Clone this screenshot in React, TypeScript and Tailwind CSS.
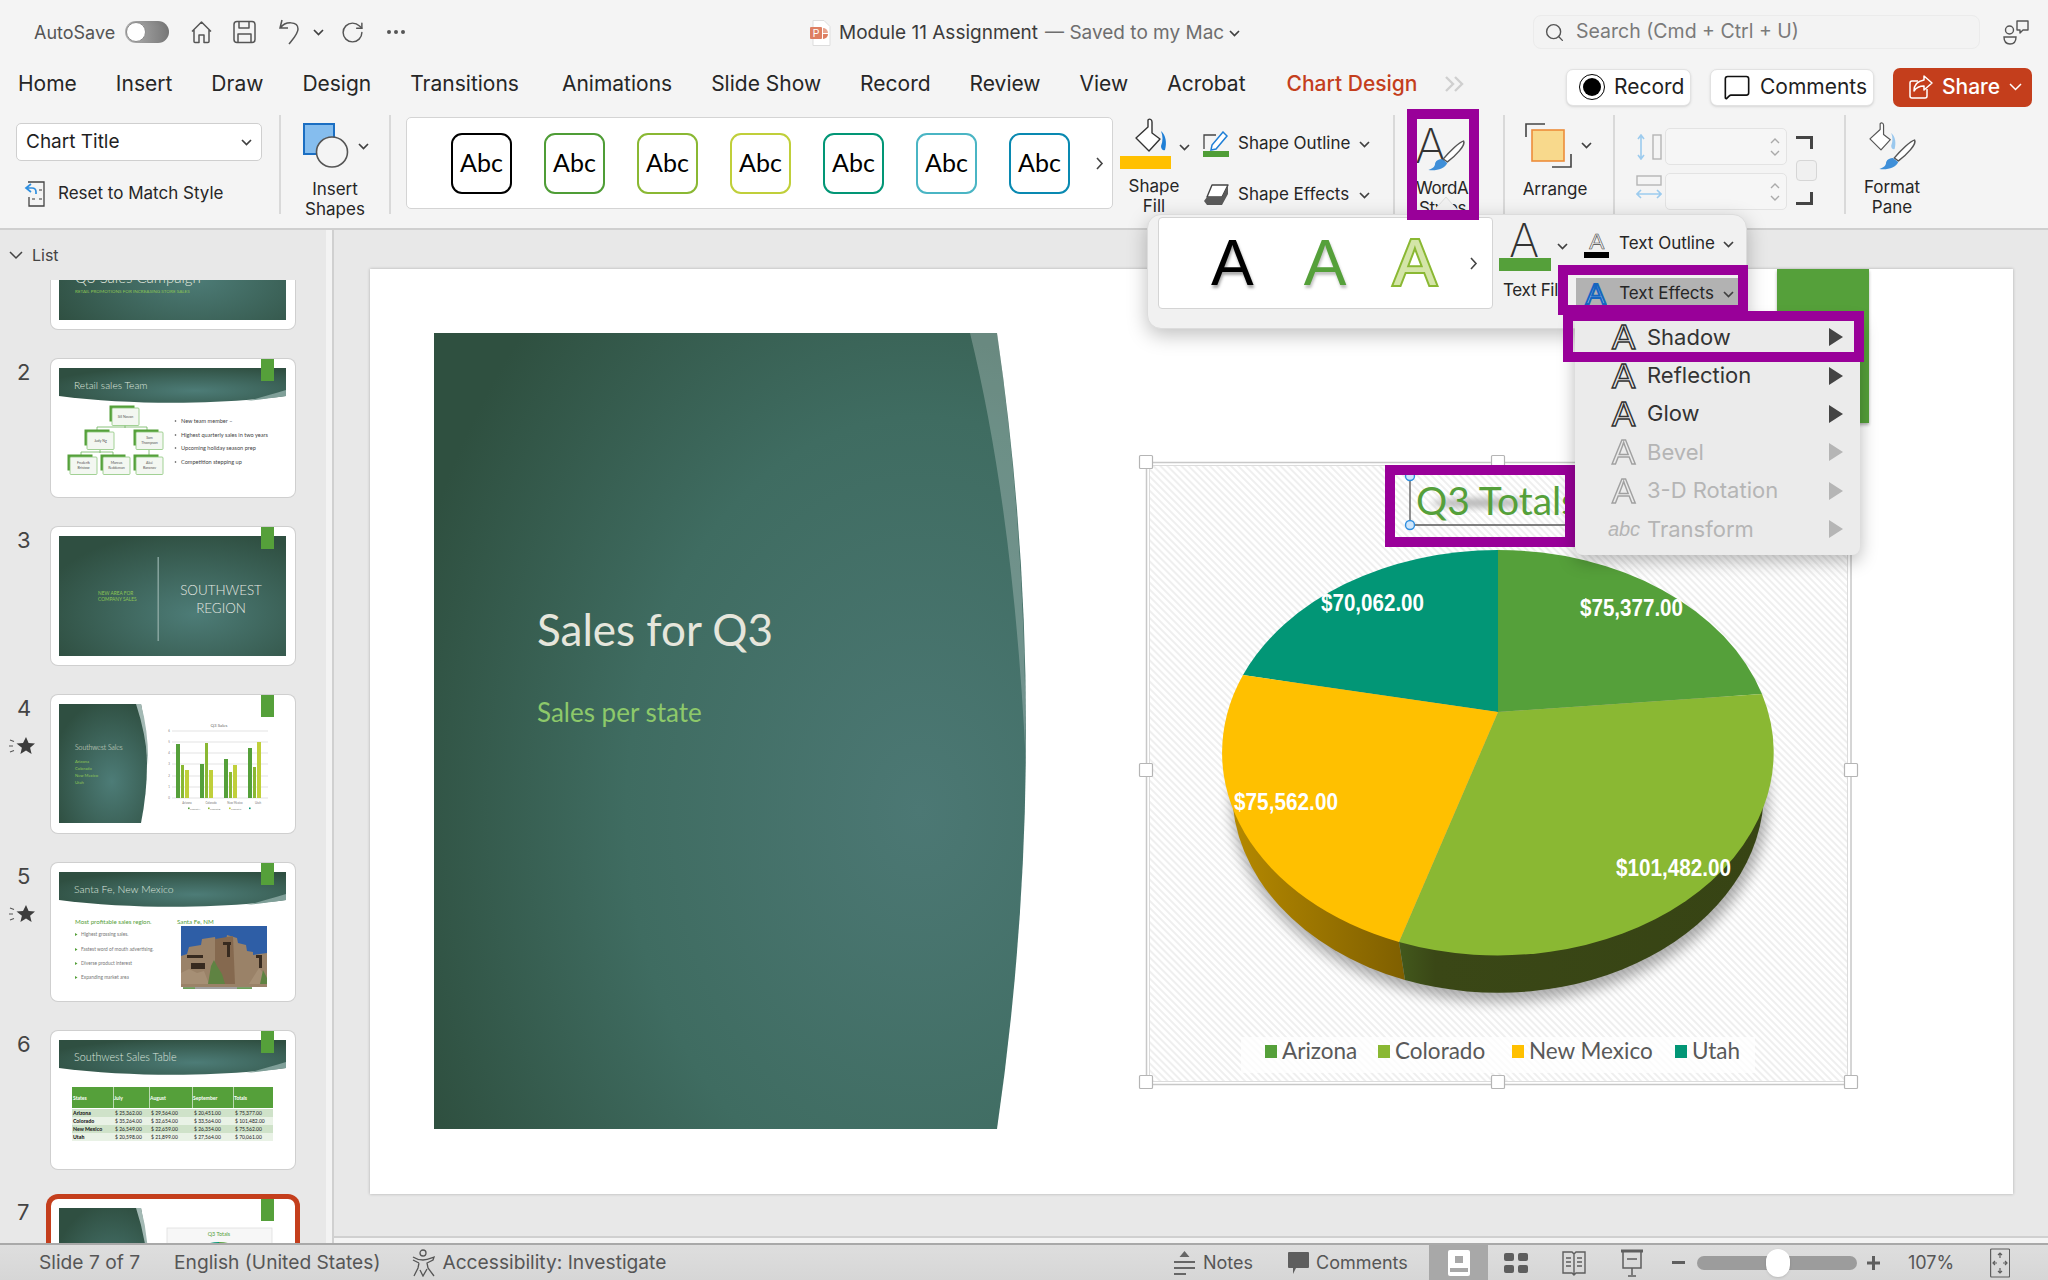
import { Search, MessageSquare, Ellipsis, RotateCw } from "lucide-react";

const tabs = ["Home", "Insert", "Draw", "Design", "Transitions", "Animations", "Slide Show", "Record", "Review", "View", "Acrobat"];
const abcColors = ["border-[#000000]", "border-[#4f9d36]", "border-[#8ab833]", "border-[#c0cf3a]", "border-[#029676]", "border-[#4ab5c4]", "border-[#0989b1]"];

const Chev = ({ className = "" }: { className?: string }) => (
  <svg width="11" height="7" viewBox="0 0 11 7" fill="none" className={className}>
    <path d="M1 1l4.5 4.5L10 1" stroke="#404040" strokeWidth="1.7" />
  </svg>
);

const Divider = () => <div className="w-[2px] h-[99px] mt-[11px] bg-[#d9d9d9] shrink-0" />;

const Label = ({ lines }: { lines: string[] }) => (
  <div className="text-[17px] leading-[20px] text-[#262626] text-center whitespace-nowrap">
    {lines.map((l) => (
      <div key={l}>{l}</div>
    ))}
  </div>
);

// outlined "A" used on the text effect icons, real glyph with a stroke
const OutlineA = ({ size = 34, color = "#444", fill = "none", sw = 1.2, grey = false }: { size?: number; color?: string; fill?: string; sw?: number; grey?: boolean }) => (
  <svg width={size * 0.8} height={size} viewBox="0 0 28 34" className={grey ? "opacity-40" : ""}>
    <text x="14" y="29" textAnchor="middle" fontSize="36" fontFamily="Liberation Sans" fill={fill} stroke={color} strokeWidth={sw}>
      A
    </text>
  </svg>
);

const Brush = ({ x = 0, y = 0, sx = 1 }: { x?: number; y?: number; sx?: number }) => (
  <g transform={`translate(${x} ${y}) scale(${sx} 1)`}>
    <path d="M30 1c2 4-6 15-12 21l-3-3C20 11 27 2 30 1z" fill="#fff" stroke="#555" strokeWidth="1.2" />
    <path d="M14 19l4 4c-2 6-8 8-14 7 4-2 5-4 5-7 1-3 3-4 5-4z" fill="#3f8fd8" />
  </g>
);

const Bucket = ({ light = false }: { light?: boolean }) => (
  <g>
    <path d="M19 3c2-2 4 0 4 2v11l8 6-11 12-13-13 12-11z" fill="#fff" stroke={light ? "#555" : "#333"} strokeWidth="1.4" strokeLinejoin="round" />
    <path d="M32 14c5 4 6 12 4 19-2 1-4-1-4-4 2-5 2-10 0-15z" fill={light ? "#9ac8ee" : "#1f7fd6"} />
  </g>
);

function TitleBar() {
  return (
    <div className="h-[64px] flex items-center relative text-[#3c3c3c]">
      <span className="ml-[34px] text-[18px] text-[#555555]">AutoSave</span>
      <div className="ml-[10px] w-[44px] h-[22px] rounded-full bg-linear-to-r from-[#b5b5b5] to-[#777777] flex items-center shadow-inner">
        <div className="w-[20px] h-[20px] ml-[1px] rounded-full bg-white border border-[#8a8a8a]" />
      </div>
      <svg width="23" height="24" viewBox="0 0 23 24" fill="none" stroke="#555" strokeWidth="1.5" strokeLinejoin="round" className="ml-[21px]">
        <path d="M2 11.5 11.5 2 21 11.5M4 10v11.5a1 1 0 0 0 1 1h4V15h5v7.5h4a1 1 0 0 0 1-1V10" />
      </svg>
      <svg width="23" height="24" viewBox="0 0 23 24" fill="none" stroke="#555" strokeWidth="1.5" strokeLinejoin="round" className="ml-[20px]">
        <rect x="1" y="1.5" width="21" height="21" rx="3" />
        <path d="M6 2v6h10V2M5 22v-8h13v8" />
      </svg>
      <svg width="23" height="28" viewBox="0 0 23 28" fill="none" stroke="#555" strokeWidth="1.5" className="ml-[22px]">
        <path d="M4 2 2 10l8 0M2.5 10C7 3 20 3 20 11c0 5-5 10-9 15" />
      </svg>
      <Chev className="ml-[12px]" />
      <RotateCw size={25} strokeWidth={1.4} color="#555" className="ml-[16px]" />
      <Ellipsis size={24} strokeWidth={2} color="#555" className="ml-[19px]" />

      <div className="absolute left-[810px] top-[19px] flex items-center">
        <svg width="22" height="26" viewBox="0 0 22 26">
          <path d="M3 .5h11l6 6v19H3z" fill="#fff" stroke="#ddd" />
          <rect x="0" y="7" width="12" height="12" rx="1" fill="#de7f62" />
          <path d="M13 8a5 5 0 0 1 5 5h-5z" fill="#e8a48e" />
          <path d="M13 14h5a5 5 0 0 1-5 5z" fill="#de7f62" />
          <text x="6" y="17" textAnchor="middle" fontSize="10" fill="#fff" fontFamily="Liberation Sans">P</text>
        </svg>
        <span className="ml-[7px] text-[19px] text-[#3c3c3c] whitespace-nowrap">Module 11 Assignment</span>
        <span className="ml-[7px] text-[19px] text-[#6e6e6e] whitespace-nowrap">— Saved to my Mac</span>
        <Chev className="ml-[5px]" />
      </div>

      <div className="absolute left-[1533px] top-[15px] w-[447px] h-[34px] rounded-[8px] border border-[#ebebeb] bg-[#f3f3f3] flex items-center">
        <Search size={21} strokeWidth={1.6} color="#555" className="ml-[10px]" />
        <span className="ml-[11px] text-[19.5px] text-[#7a7a7a]">Search (Cmd + Ctrl + U)</span>
      </div>
      <svg width="27" height="26" viewBox="0 0 27 26" fill="none" stroke="#555" strokeWidth="1.4" className="absolute left-[2003px] top-[19px]">
        <circle cx="6.5" cy="11" r="4" />
        <path d="M1 18h12c0 4-2 7-6 7s-6-3-6-7z" />
        <path d="M14 2h11v9h-5l-3 3v-3h-3z" strokeLinejoin="round" />
      </svg>
    </div>
  );
}

function TabBar() {
  return (
    <div className="h-[40px] flex items-center text-[#262626]">
      <div className="flex items-center pl-[18px] gap-[39px] text-[21px] whitespace-nowrap">
        {tabs.map((t) => (
          <span key={t} className={t === "Animations" ? "ml-[4px]" : ""}>{t}</span>
        ))}
        <span className="ml-[2px] text-[#c43e1c] font-medium">Chart Design</span>
      </div>
      <svg width="20" height="16" viewBox="0 0 20 16" fill="none" stroke="#cfcfcf" strokeWidth="2.4" className="ml-[27px]">
        <path d="M2 1l7 7-7 7M11 1l7 7-7 7" />
      </svg>
      <div className="ml-auto pr-[16px] pt-[6px] flex items-center gap-[19px] text-[21px] text-[#1f1f1f]">
        <div className="h-[37px] w-[125px] rounded-[7px] bg-white border border-[#e2e2e2] shadow-sm flex items-center pl-[12px] gap-[9px]">
          <div className="w-[26px] h-[26px] rounded-full border border-black flex items-center justify-center shrink-0">
            <div className="w-[18px] h-[18px] rounded-full bg-black" />
          </div>
          Record
        </div>
        <div className="h-[37px] w-[164px] rounded-[7px] bg-white border border-[#e2e2e2] shadow-sm flex items-center pl-[12px] gap-[9px]">
          <MessageSquare size={28} strokeWidth={1.4} color="#111" className="shrink-0" />
          Comments
        </div>
        <div className="h-[39px] w-[139px] rounded-[7px] bg-[#c43e1c] flex items-center pl-[15px] text-white font-medium">
          <svg width="26" height="26" viewBox="0 0 26 26" fill="none" stroke="#fff" strokeWidth="1.5" strokeLinejoin="round" className="shrink-0">
            <path d="M19 15v7a2 2 0 0 1-2 2H4a2 2 0 0 1-2-2V9a2 2 0 0 1 2-2h6" />
            <path d="M16 2l8 7-8 7v-4c-5 0-8 2-10 5 0-6 4-10 10-11z" />
          </svg>
          <span className="ml-[8px]">Share</span>
          <svg width="13" height="8" viewBox="0 0 13 8" fill="none" stroke="#fff" strokeWidth="1.5" className="ml-[9px] shrink-0">
            <path d="M1 1l5.5 5.5L12 1" />
          </svg>
        </div>
      </div>
    </div>
  );
}

function Ribbon() {
  return (
    <div className="h-[124px] flex items-start border-b-0">
      <div className="w-[279px] shrink-0 pl-[16px] pt-[19px]">
        <div className="w-[246px] h-[38px] rounded-[5px] bg-white border border-[#cfcfcf] flex items-center justify-between px-[9px] text-[19px] text-[#1f1f1f]">
          Chart Title
          <Chev />
        </div>
        <div className="flex items-center mt-[20px] ml-[7px] h-[26px]">
          <svg width="23" height="26" viewBox="0 0 23 26" fill="none">
            <path d="M5 1h16v24H6v-9" stroke="#444" strokeWidth="1.3" />
            <path d="M8 3 3 7l5 4M3 7h6c3 0 4 2 4 4v2" stroke="#2f8fe0" strokeWidth="1.7" />
            <path d="M16 9h3M16 18h3M9 18h3" stroke="#777" strokeWidth="1.3" />
          </svg>
          <span className="ml-[12px] text-[17px] text-[#262626] whitespace-nowrap">Reset to Match Style</span>
        </div>
      </div>
      <Divider />
      <div className="w-[108px] shrink-0 flex flex-col items-center">
        <div className="h-[75px] w-full flex items-start pt-[19px] pl-[22px]">
          <svg width="46" height="45" viewBox="0 0 46 45">
            <rect x="1" y="1" width="30" height="30" fill="#85bdee" stroke="#1b6ec2" strokeWidth="2" />
            <ellipse cx="29" cy="29" rx="15.5" ry="15" fill="#f4f4f4" stroke="#555" strokeWidth="1.6" />
          </svg>
          <Chev className="ml-[9px] mt-[20px]" />
        </div>
        <Label lines={["Insert", "Shapes"]} />
      </div>
      <Divider />
      <div className="w-[707px] h-[92px] ml-[15px] mt-[13px] shrink-0 rounded-[5px] bg-white border border-[#d4d4d4] flex items-center pl-[44px] relative">
        <div className="flex gap-[32px]">
          {abcColors.map((c) => (
            <div key={c} className={`w-[61px] h-[61px] rounded-[11px] border-2 ${c} flex items-center justify-center font-['Lato',sans-serif] text-[25px] text-black`}>
              Abc
            </div>
          ))}
        </div>
        <svg width="8" height="13" viewBox="0 0 8 13" fill="none" stroke="#444" strokeWidth="1.6" className="ml-[26px]">
          <path d="M1 1l5 5.5L1 12" />
        </svg>
      </div>
      <div className="w-[280px] shrink-0 flex">
        <div className="w-[80px] ml-[1px] shrink-0 flex flex-col items-center">
          <svg width="42" height="40" viewBox="0 0 42 38" className="mt-[12px] self-start ml-[15px]">
            <Bucket />
          </svg>
          <div className="w-[51px] h-[13px] bg-[#ffc000] self-start ml-[6px]" />
          <div className="mt-[7px]">
            <Label lines={["Shape", "Fill"]} />
          </div>
        </div>
        <Chev className="mt-[40px] -ml-[15px] shrink-0" />
        <div className="ml-[13px] pt-[26px] text-[17px] text-[#262626] whitespace-nowrap">
          <div className="flex items-center h-[28px]">
            <svg width="26" height="26" viewBox="0 0 26 26" fill="none">
              <path d="M13 4H1v14" stroke="#444" strokeWidth="1.3" />
              <path d="M20 1l4 4-11 13-5 1 1-5z" fill="#fff" stroke="#1f7fd6" strokeWidth="1.5" />
              <rect x="0" y="20" width="26" height="6" fill="#4f9d36" />
            </svg>
            <span className="ml-[9px] w-[114px]">Shape Outline</span>
            <Chev className="ml-[7px]" />
          </div>
          <div className="flex items-center h-[28px] mt-[23px]">
            <svg width="26" height="24" viewBox="0 0 26 24" fill="none">
              <path d="M9 2h16l-6 12H4z" fill="#fff" stroke="#444" strokeWidth="1.4" strokeLinejoin="round" />
              <path d="M4 14h15l6-12v9l-6 11H4l-3-4z" fill="#5a5a5a" />
            </svg>
            <span className="ml-[9px] w-[114px]">Shape Effects</span>
            <Chev className="ml-[7px]" />
          </div>
        </div>
      </div>
      <Divider />
      <div className="w-[108px] shrink-0 flex flex-col items-start relative">
        <svg width="60" height="52" viewBox="0 0 60 52" className="mt-[19px] ml-[19px]">
          <text x="1" y="40" fontSize="48" fontFamily="Inter" fontWeight="200" fill="#333">A</text>
          <Brush x={9} y={17} sx={1.35} />
        </svg>
        <div className="mt-[3px] ml-[21px] w-[53px] overflow-hidden tracking-[-0.4px]">
          <Label lines={["WordArt", "Styles"]} />
        </div>
      </div>
      <Divider />
      <div className="w-[108px] shrink-0 flex flex-col items-center">
        <div className="h-[75px] w-full flex items-start pt-[19px] pl-[20px]">
          <svg width="47" height="45" viewBox="0 0 47 45" fill="none">
            <path d="M1 14V1h19M46 31v13H27" stroke="#444" strokeWidth="1.6" />
            <rect x="7" y="7" width="32" height="31" fill="#f8d98c" stroke="#ed8d3a" strokeWidth="1.6" />
          </svg>
          <Chev className="ml-[9px] mt-[19px]" />
        </div>
        <div className="pr-[8px]">
          <Label lines={["Arrange"]} />
        </div>
      </div>
      <Divider />
      <div className="w-[229px] shrink-0 flex pl-[21px] pt-[24px]">
        <div className="flex flex-col gap-[15px] pt-[6px]">
          <svg width="26" height="26" viewBox="0 0 26 26" fill="none">
            <path d="M5 1v24M2 5l3-4 3 4M2 21l3 4 3-4" stroke="#9ccbee" strokeWidth="1.6" />
            <rect x="17" y="1" width="8" height="24" stroke="#b5b5b5" strokeWidth="1.4" />
          </svg>
          <svg width="26" height="25" viewBox="0 0 26 25" fill="none">
            <rect x="1" y="1" width="24" height="9" stroke="#b5b5b5" strokeWidth="1.4" />
            <path d="M1 19h24M5 15l-4 4 4 4M21 15l4 4-4 4" stroke="#9ccbee" strokeWidth="1.6" />
          </svg>
        </div>
        <div className="ml-[3px] flex flex-col gap-[8px]">
          {[0, 1].map((i) => (
            <div key={i} className="w-[122px] h-[37px] rounded-[5px] bg-[#f6f6f6] border border-[#e3e3e3] flex flex-col items-end justify-center gap-[6px] pr-[6px]">
              <svg width="10" height="6" viewBox="0 0 10 6" fill="none" stroke="#aaa" strokeWidth="1.4"><path d="M1 5l4-4 4 4" /></svg>
              <svg width="10" height="6" viewBox="0 0 10 6" fill="none" stroke="#aaa" strokeWidth="1.4"><path d="M1 1l4 4 4-4" /></svg>
            </div>
          ))}
        </div>
        <div className="ml-[9px] flex flex-col items-center pt-[8px] w-[21px]">
          <svg width="17" height="13" viewBox="0 0 17 13" fill="none" stroke="#444" strokeWidth="3" className="-ml-[4px]"><path d="M0 1.5h15.5V13" /></svg>
          <div className="mt-[11px] w-[21px] h-[21px] rounded-[4px] bg-[#f0f0f0] border border-[#d6d6d6]" />
          <svg width="17" height="13" viewBox="0 0 17 13" fill="none" stroke="#444" strokeWidth="3" className="mt-[11px] -ml-[4px]"><path d="M15.5 0v11.5H0" /></svg>
        </div>
      </div>
      <Divider />
      <div className="w-[92px] shrink-0 flex flex-col items-center">
        <svg width="56" height="50" viewBox="0 0 56 50" className="mt-[17px]">
          <g transform="scale(0.85)"><Bucket light /></g>
          <Brush x={10} y={18} sx={1.35} />
        </svg>
        <div className="mt-[6px]">
          <Label lines={["Format", "Pane"]} />
        </div>
      </div>
    </div>
  );
}

// ---- slide thumbnails, each is a small picture with its own 244x138 canvas
const Grad = ({ id }: { id: string }) => (
  <defs>
    <radialGradient id={id} cx="60%" cy="65%" r="70%">
      <stop offset="0%" stopColor="#4d7c77" />
      <stop offset="100%" stopColor="#2f4f41" />
    </radialGradient>
  </defs>
);

const Accent = () => <rect x="210" y="0" width="13" height="22" fill="#55a03a" />;

const Banner = ({ id, title, size = 10.2 }: { id: string; title: string; size?: number }) => (
  <g>
    <Grad id={id} />
    <path d="M8 9h227v28c-60 8-150 10-227 0z" fill={`url(#${id})`} />
    <path d="M235 31v6c-20 3-30 4-40 5 14-3 26-7 40-11z" fill="#7f9f98" />
    <text x="23" y="30" fontSize={size} fontWeight="300" fill="#dfe5dd">{title}</text>
  </g>
);

const OrgBox = ({ x, y, lines }: { x: number; y: number; lines: string[] }) => (
  <g>
    <rect x={x - 2.5} y={y - 2.5} width="25" height="16" fill="#55a03a" />
    <rect x={x} y={y} width="27" height="17.5" rx="1" fill="#f3f7f1" stroke="#8cc77b" strokeWidth="0.8" />
    {lines.map((l, i) => (
      <text key={l} x={x + 13.5} y={y + (lines.length === 1 ? 10 : 7) + i * 5} fontSize="3.6" textAnchor="middle" fill="#555">{l}</text>
    ))}
  </g>
);

const ThumbSvg = ({ children }: { children: React.ReactNode }) => (
  <svg width="244" height="138" viewBox="0 0 244 138" className="block font-['Lato',sans-serif]">
    {children}
  </svg>
);

const Thumb1 = () => (
  <ThumbSvg>
    <Grad id="t1" />
    <rect x="8" y="9" width="227" height="120" fill="url(#t1)" />
    <text x="24" y="92" fontSize="15" fontWeight="300" fill="#e4e8df">Q3 Sales Campaign</text>
    <text x="24" y="102" fontSize="4.6" fill="#8dc655">RETAIL PROMOTIONS FOR INCREASING STORE SALES</text>
  </ThumbSvg>
);

const Thumb2 = () => (
  <ThumbSvg>
    <Banner id="t2" title="Retail sales Team" />
    <path d="M74 66v3M46 73v-5h50v5M49 91v3M30 98v-5h32v5M98 91v7" stroke="#6db35a" strokeWidth="0.8" fill="none" />
    <OrgBox x={61} y={49} lines={["Sill Novan"]} />
    <OrgBox x={36} y={73} lines={["Judy Ng"]} />
    <OrgBox x={85} y={73} lines={["Sam", "Thompson"]} />
    <OrgBox x={19} y={98} lines={["Frederik", "Bristow"]} />
    <OrgBox x={52} y={98} lines={["Marcus", "Reddeman"]} />
    <OrgBox x={85} y={98} lines={["Aleé", "Baranov"]} />
    {[
      ["New team member –", 64],
      ["Highest quarterly sales in two years", 78],
      ["Upcoming holiday season prep", 91],
      ["Competition stepping up", 105],
    ].map(([t, y]) => (
      <g key={t as string}>
        <circle cx="124.5" cy={(y as number) - 2} r="0.8" fill="#444" />
        <text x="130" y={y as number} fontSize="5.6" fill="#444">{t}</text>
      </g>
    ))}
    <Accent />
  </ThumbSvg>
);

const Thumb3 = () => (
  <ThumbSvg>
    <Grad id="t3" />
    <rect x="8" y="9" width="227" height="120" fill="url(#t3)" />
    <rect x="106.5" y="30" width="1.4" height="84" fill="#8ba8a2" />
    <text x="47" y="68" fontSize="4.8" fill="#8dc655">NEW AREA FOR</text>
    <text x="47" y="74" fontSize="4.8" fill="#8dc655">COMPANY SALES</text>
    <text x="170" y="68" fontSize="13.4" fontWeight="300" fill="#e6e9e2" textAnchor="middle">SOUTHWEST</text>
    <text x="170" y="86" fontSize="13.4" fontWeight="300" fill="#e6e9e2" textAnchor="middle">REGION</text>
    <Accent />
  </ThumbSvg>
);

const SidePanel = ({ id }: { id: string }) => (
  <g>
    <Grad id={id} />
    <path d="M8 9h82q12 60 0 119H8z" fill={`url(#${id})`} />
    <path d="M85 9h5q8 30 7 62-2-32-12-62z" fill="#a3b9b4" />
  </g>
);

const bars = [
  [125, 49, 4],
  [130, 70, 3],
  [134, 75, 4],
  [149, 69, 4],
  [154, 48, 3],
  [158, 75, 4],
  [173, 64, 4],
  [178, 77, 3],
  [182, 70, 4],
  [197, 53, 4],
  [202, 72, 3],
  [206, 47, 4],
];
const barColors = ["#55a03a", "#8ab833", "#c0cf3a"];

const Thumb4 = () => (
  <ThumbSvg>
    <SidePanel id="t4" />
    <text x="24" y="55" fontSize="6.8" fontWeight="300" fill="#e0e5dd">Southwest Sales</text>
    {["Arizona", "Colorado", "New Mexico", "Utah"].map((s, i) => (
      <text key={s} x="24" y={67.5 + i * 7} fontSize="4.2" fill="#8dc655">{s}</text>
    ))}
    <text x="168" y="32" fontSize="4.4" fill="#666" textAnchor="middle">Q3 Sales</text>
    {[36, 47, 58, 69, 81, 92, 103].map((y, i) => (
      <g key={y}>
        <rect x="121" y={y - 0.5} width="96" height="1" fill="#e4e4e4" />
        <text x="118" y={y + 1} fontSize="2.8" fill="#777" textAnchor="middle">{6 - i}</text>
      </g>
    ))}
    {bars.map(([x, y, w], i) => (
      <rect key={x} x={x} y={y} width={w} height={103 - y} fill={barColors[i % 3]} />
    ))}
    {[["Arizona", 136], ["Colorado", 160], ["New Mexico", 184], ["Utah", 207]].map(([s, x]) => (
      <text key={s as string} x={x as number} y="109" fontSize="2.8" fill="#777" textAnchor="middle">{s}</text>
    ))}
    {[["Product A", 137, "#55a03a"], ["Product B", 157, "#8ab833"], ["Product C", 178, "#c0cf3a"]].map(([s, x, c]) => (
      <g key={s as string}>
        <rect x={x as number} y="112.5" width="1.6" height="1.6" fill={c as string} />
        <text x={(x as number) + 2} y="115" fontSize="2.4" fill="#777">{s}</text>
      </g>
    ))}
    <rect x="198" y="112.5" width="1.6" height="1.6" fill="#029676" />
    <Accent />
  </ThumbSvg>
);

const Thumb5 = () => (
  <ThumbSvg>
    <Banner id="t5" title="Santa Fe, New Mexico" size={10.4} />
    <text x="24" y="61" fontSize="6.2" fill="#55a03a">Most profitable sales region.</text>
    <text x="126" y="61" fontSize="6.2" fill="#55a03a">Santa Fe, NM</text>
    {[
      ["Highest grossing sales.", 73],
      ["Fastest word of mouth advertising.", 88],
      ["Diverse product interest", 102],
      ["Expanding market area", 116],
    ].map(([t, y]) => (
      <g key={t as string}>
        <path d={`M24 ${(y as number) - 3}l2.5 1.5-2.5 1.5z`} fill="#55a03a" />
        <text x="30" y={y as number} fontSize="4.8" fill="#777">{t}</text>
      </g>
    ))}
    <rect x="130" y="63" width="86" height="58" fill="#2e5ea6" />
    <path d="M130 93l6-2 2-7 12-2 1-6 13-2 1 6 10-2 1-6 10 3 1 5 8 2 1 6 6 1v3l14-2v34h-86z" fill="#9a8268" />
    <path d="M164 76l18-3 2 48h-20z" fill="#85694f" />
    <path d="M136 92h16v3h-16zM172 79h8v3h-8zM176 82h3v12h-3zM205 92h6v3h-6zM208 95h3v10h-3zM140 100h14v6h-14z" fill="#372a1f" />
    <path d="M130 110l8-4 8 4 7-2 5 13h-28zM198 121l10-16 8 10v6z" fill="#a68f75" />
    <path d="M157 121l3-18 3-6 3 6 5 8 3 10zM209 121l3-14 4 8v6z" fill="#5f8342" />
    <rect x="132" y="124.5" width="69" height="1" fill="#444" />
    <rect x="132" y="124.5" width="12" height="1.2" fill="#55a03a" />
    <rect x="186" y="124.5" width="15" height="1.2" fill="#55a03a" />
    <Accent />
  </ThumbSvg>
);

const tableRows = [
  ["Arizona", "$ 25,362.00", "$ 29,564.00", "$ 20,451.00", "$ 75,377.00"],
  ["Colorado", "$ 35,264.00", "$ 32,654.00", "$ 33,564.00", "$ 101,482.00"],
  ["New Mexico", "$ 26,549.00", "$ 22,659.00", "$ 26,354.00", "$ 75,562.00"],
  ["Utah", "$ 20,598.00", "$ 21,899.00", "$ 27,564.00", "$ 70,061.00"],
];
const colX = [21, 62, 98, 141, 182, 222];

const Thumb6 = () => (
  <ThumbSvg>
    <Banner id="t6" title="Southwest Sales Table" size={10.8} />
    <rect x="21" y="56" width="201" height="21" fill="#55a03a" />
    {["States", "July", "August", "September", "Totals"].map((h, i) => (
      <text key={h} x={colX[i] + 1} y="69" fontSize="5" fontWeight="700" fill="#fff">{h}</text>
    ))}
    {colX.slice(1, 5).map((x) => (
      <rect key={x} x={x} y="56" width="0.6" height="54" fill="#fff" />
    ))}
    {tableRows.map((r, i) => (
      <g key={r[0]}>
        <rect x="21" y={78 + i * 8} width="201" height="8" fill={i % 2 ? "#e9f2e6" : "#cfe2c9"} />
        {r.map((c, j) => (
          <text key={j} x={colX[j] + (j ? 2 : 1)} y={84 + i * 8} fontSize={j ? 5 : 5.2} fontWeight={j ? 400 : 900} fill="#222">{c}</text>
        ))}
      </g>
    ))}
    <Accent />
  </ThumbSvg>
);

const Thumb7 = () => (
  <ThumbSvg>
    <SidePanel id="t7" />
    <rect x="116" y="29" width="105" height="80" fill="#f7f7f7" stroke="#dedede" strokeWidth="0.8" />
    <text x="168" y="37" fontSize="5.4" fill="#55a03a" textAnchor="middle">Q3 Totals</text>
    <path d="M150 50a18 8 0 0 1 18-7v7z" fill="#029676" />
    <path d="M168 43a18 8 0 0 1 18 7h-18z" fill="#55a03a" />
    <Accent />
  </ThumbSvg>
);

const SlideRow = ({ n, star, active, top, children }: { n: number; star?: boolean; active?: boolean; top?: string; children: React.ReactNode }) => (
  <div className={`flex h-[138px] mb-[30px] shrink-0 ${top ?? ""}`}>
    <div className="w-[51px] shrink-0 pl-[17px] text-[22px] leading-[26px] text-[#444444] relative">
      {n > 1 && n}
      {star && (
        <svg width="28" height="20" viewBox="0 0 28 20" className="absolute left-[9px] top-[41px]">
          <path d="M17 1l2.6 6 6.4.5-4.9 4.2 1.5 6.3-5.6-3.4-5.6 3.4 1.5-6.3L7.5 7.5 14 7z" fill="#3d3d3d" />
          <path d="M1 4l4 1.5M0 10h4M1 16l4-1.5" stroke="#555" strokeWidth="1.1" />
        </svg>
      )}
    </div>
    <div className={`w-[244px] h-[138px] rounded-[7px] bg-white shadow-[0_0_0_1px_#cfcfcf] overflow-hidden shrink-0 ${active ? "ring-[5px] ring-[#c43e1c]" : ""}`}>
      {children}
    </div>
  </div>
);

function Sidebar() {
  return (
    <div className="w-[326px] shrink-0 bg-[#e8e8e8] flex flex-col overflow-hidden">
      <div className="h-[50px] shrink-0 flex items-center pl-[9px] text-[#444444] text-[16px]">
        <svg width="14" height="9" viewBox="0 0 14 9" fill="none" stroke="#444" strokeWidth="1.5">
          <path d="M1 1l6 6 6-6" />
        </svg>
        <span className="ml-[9px]">List</span>
      </div>
      <div className="flex-1 overflow-hidden">
        <SlideRow n={1} top="-mt-[89px]"><Thumb1 /></SlideRow>
        <SlideRow n={2}><Thumb2 /></SlideRow>
        <SlideRow n={3}><Thumb3 /></SlideRow>
        <SlideRow n={4} star><Thumb4 /></SlideRow>
        <SlideRow n={5} star><Thumb5 /></SlideRow>
        <SlideRow n={6}><Thumb6 /></SlideRow>
        <SlideRow n={7} active><Thumb7 /></SlideRow>
      </div>
    </div>
  );
}

// chart drawn in page coordinates so the numbers line up with the reference
const handles = [
  [1146, 462],
  [1498, 462],
  [1851, 462],
  [1146, 770],
  [1851, 770],
  [1146, 1082],
  [1498, 1082],
  [1851, 1082],
];

const pieLabels: [string, number, number, number][] = [
  ["$70,062.00", 1321, 611, 103],
  ["$75,377.00", 1580, 616, 103],
  ["$75,562.00", 1234, 810, 104],
  ["$101,482.00", 1616, 876, 115],
];

function Chart() {
  return (
    <svg viewBox="1135 452 726 642" width="726" height="642" className="absolute left-[765px] top-[183px] font-['Lato',sans-serif]">
      <defs>
        <pattern id="hatch" width="5" height="5" patternUnits="userSpaceOnUse" patternTransform="rotate(-45)">
          <rect width="5" height="5" fill="#ffffff" />
          <rect width="2" height="5" fill="#efefef" />
        </pattern>
        <linearGradient id="goldSide" x1="0" y1="0" x2="1" y2="0">
          <stop offset="0%" stopColor="#b58900" />
          <stop offset="100%" stopColor="#7f5f00" />
        </linearGradient>
        <linearGradient id="greenSide" x1="0" y1="0" x2="1" y2="0">
          <stop offset="0%" stopColor="#43591c" />
          <stop offset="10%" stopColor="#3a4716" />
          <stop offset="100%" stopColor="#374414" />
        </linearGradient>
        <filter id="pieBlur" x="-10%" y="-10%" width="120%" height="120%">
          <feGaussianBlur stdDeviation="7" />
        </filter>
        <filter id="ghost" x="-20%" y="-50%" width="140%" height="200%">
          <feGaussianBlur stdDeviation="3" />
        </filter>
      </defs>
      <rect x="1149" y="465" width="699" height="617" fill="url(#hatch)" />
      <rect x="1146.5" y="462.5" width="704.5" height="622" fill="none" stroke="#c8c8c8" strokeWidth="1.5" />
      <rect x="1149.5" y="465.5" width="698" height="616" fill="none" stroke="#dcdcdc" strokeWidth="1" />
      {handles.map(([x, y]) => (
        <rect key={`${x}-${y}`} x={x - 6.5} y={y - 6.5} width="13" height="13" rx="1" fill="#fff" stroke="#b5b5b5" strokeWidth="1.2" />
      ))}

      <ellipse cx="1500" cy="800" rx="268" ry="202" fill="#000" opacity="0.32" filter="url(#pieBlur)" />
      <path d="M1232 791A266 202 0 0 0 1405 980L1399 942 1232 760Z" fill="url(#goldSide)" />
      <path d="M1405 980A266 202 0 0 0 1764 791L1762 760 1399 942Z" fill="url(#greenSide)" />

      <path d="M1498 712V550A276 203 0 0 0 1243 675Z" fill="#029676" />
      <path d="M1498 712V550A276 203 0 0 1 1762 694Z" fill="#55a03a" />
      <path d="M1498 712L1762 694A276 203 0 0 1 1399 942Z" fill="#8ab833" />
      <path d="M1498 712L1399 942A276 203 0 0 1 1243 675Z" fill="#ffc000" />

      <g fontFamily="Liberation Sans" fontWeight="700" fontSize="23" fill="#fff">
        {pieLabels.map(([t, x, y, w]) => (
          <text key={t} x={x} y={y} textLength={w} lengthAdjust="spacingAndGlyphs">{t}</text>
        ))}
      </g>

      <rect x="1241" y="1037" width="514" height="36" fill="#fff" opacity="0.75" />
      {[
        ["Arizona", 1265, "#55a03a"],
        ["Colorado", 1378, "#8ab833"],
        ["New Mexico", 1512, "#ffc000"],
        ["Utah", 1675, "#029676"],
      ].map(([t, x, c]) => (
        <g key={t as string}>
          <rect x={x as number} y="1045" width="12" height="13" fill={c as string} />
          <text x={(x as number) + 17} y="1059" fontSize="22.5" fill="#595959">{t}</text>
        </g>
      ))}

      <ellipse cx="1480" cy="503" rx="48" ry="5" fill="#b9b9b9" filter="url(#ghost)" />
      <text x="1416" y="515" fontSize="39" fill="#55a03a">Q3 Totals</text>
      <path d="M1410 476V525H1570" stroke="#555" strokeWidth="1.3" fill="none" />
      <circle cx="1410" cy="476" r="4.5" fill="#cfe6fb" stroke="#2f8fe0" strokeWidth="1.4" />
      <circle cx="1410" cy="525" r="4.5" fill="#cfe6fb" stroke="#2f8fe0" strokeWidth="1.4" />
    </svg>
  );
}

function SlideCanvas() {
  return (
    <div className="flex-1 min-w-0 bg-[#e8e8e8] flex flex-col">
      <div className="flex-1 pl-[36px] pt-[39px]">
        <div className="relative w-[1643px] h-[925px] bg-white shadow-[0_0_3px_rgba(0,0,0,0.25)] font-['Lato',sans-serif]">
          <svg width="600" height="796" viewBox="0 0 600 796" className="absolute left-[64px] top-[64px]">
            <defs>
              <radialGradient id="panel" cx="82%" cy="60%" r="90%">
                <stop offset="0%" stopColor="#4c7874" />
                <stop offset="55%" stopColor="#3f6c61" />
                <stop offset="100%" stopColor="#2f5040" />
              </radialGradient>
            </defs>
            <path d="M0 0H563Q621 398 563 796H0Z" fill="url(#panel)" />
            <path d="M536 0H563Q592 200 592 433Q580 180 536 0Z" fill="#fff" opacity="0.24" />
          </svg>
          <div className="absolute left-[167px] top-[334px] text-[44px] leading-[52px] text-[#e6e6dc] whitespace-nowrap">Sales for Q3</div>
          <div className="absolute left-[167px] top-[426px] text-[26px] leading-[34px] text-[#8dc96a] whitespace-nowrap">Sales per state</div>
          <div className="absolute left-[1407px] top-0 w-[92px] h-[154px] bg-[#55a03a] shadow-[0_2px_3px_rgba(0,0,0,0.3)]" />
          <Chart />
        </div>
      </div>
      <div className="h-[7px] shrink-0 border-t-2 border-[#d0d0d0] bg-[#f4f4f4]" />
    </div>
  );
}

function StatusBar() {
  return (
    <div className="h-[37px] shrink-0 border-t-2 border-[#a9a9a9] bg-linear-to-b from-[#dedede] to-[#d6d6d6] flex items-center text-[19.2px] text-[#565656] whitespace-nowrap">
      <span className="ml-[39px]">Slide 7 of 7</span>
      <span className="ml-[34px]">English (United States)</span>
      <svg width="25" height="28" viewBox="0 0 25 28" fill="none" stroke="#555" strokeWidth="1.3" className="ml-[32px]">
        <circle cx="11" cy="4" r="3" />
        <path d="M1 8c3 2 6 3 10 3s6-1 11-3l-1 3-6 3 1 5 6 8M7 14l-1 5-4 8M7 14l-6-3M15 20l-4 7-3-6" />
      </svg>
      <span className="ml-[5px]">Accessibility: Investigate</span>

      <div className="ml-auto pr-[38px] flex items-center h-full text-[18px]">
        <svg width="21" height="26" viewBox="0 0 21 26" fill="#666">
          <path d="M10.5 1l5 6h-10zM0 11h21v2H0zM0 17h21v2H0zM0 23h12v2H0z" />
        </svg>
        <span className="ml-[8px] w-[52px]">Notes</span>
        <svg width="21" height="26" viewBox="0 0 21 26" fill="#5e5e5e" className="ml-[33px]">
          <path d="M1 2h19a1 1 0 0 1 1 1v14a1 1 0 0 1-1 1H8l-3 6v-6H1a1 1 0 0 1-1-1V3a1 1 0 0 1 1-1z" />
        </svg>
        <span className="ml-[7px] w-[96px]">Comments</span>
        <div className="ml-[17px] w-[59px] h-full bg-[#a8a8a8] flex items-center justify-center">
          <svg width="22" height="26" viewBox="0 0 22 26" fill="none">
            <rect x="0" y="0" width="22" height="26" rx="2" fill="#fff" />
            <rect x="7" y="6" width="8" height="7" fill="#a8a8a8" />
            <rect x="2" y="18" width="18" height="4" fill="#a8a8a8" />
          </svg>
        </div>
        <svg width="24" height="24" viewBox="0 0 24 24" fill="#5e5e5e" className="ml-[16px]">
          <rect x="0" y="2" width="10" height="8" rx="2" />
          <rect x="14" y="2" width="10" height="8" rx="2" />
          <rect x="0" y="14" width="10" height="8" rx="2" />
          <rect x="14" y="14" width="10" height="8" rx="2" />
        </svg>
        <svg width="24" height="26" viewBox="0 0 24 26" fill="none" stroke="#5e5e5e" strokeWidth="1.4" className="ml-[34px]">
          <path d="M1 2h9l2 2 2-2h9v21h-9l-2 2-2-2H1zM12 4v21M4 8h5M4 12h5M4 16h5M15 8h5M15 12h5M15 16h5" />
        </svg>
        <svg width="24" height="28" viewBox="0 0 24 28" fill="none" stroke="#5e5e5e" strokeWidth="1.5" className="ml-[34px]">
          <path d="M1 2h22" strokeWidth="3" />
          <path d="M3 3v16h18V3M7 10h10M12 19v7M8 27h8" />
        </svg>
        <div className="ml-[28px] w-[13px] h-[3px] bg-[#5e5e5e]" />
        <div className="ml-[12px] w-[160px] h-[14px] rounded-full bg-[#9c9c9c] relative">
          <div className="absolute left-[69px] -top-[7px] w-[24px] h-[28px] rounded-full bg-white shadow" />
        </div>
        <svg width="13" height="14" viewBox="0 0 13 14" fill="#5e5e5e" className="ml-[10px]">
          <path d="M0 5.5h13v3H0zM5 0h3v14H5z" />
        </svg>
        <span className="ml-[28px] w-[49px]">107%</span>
        <svg width="20" height="30" viewBox="0 0 20 30" fill="none" stroke="#5e5e5e" strokeWidth="1.2" className="ml-[33px]">
          <rect x="0.6" y="1" width="19" height="28" rx="1" />
          <path d="M10 5v5M8 7l2-2 2 2M10 25v-5M8 23l2 2 2-2M4 15h3M5 13l-2 2 2 2M16 15h-3M15 13l2 2-2 2" />
        </svg>
      </div>
    </div>
  );
}

function TextEffectsPopup() {
  return (
    <div className="absolute left-[1147px] top-[214px] w-[600px] h-[115px] rounded-[14px] bg-[#f1f1f1] border border-[#dcdcdc] shadow-[0_6px_20px_rgba(0,0,0,0.25)] flex">
      <div className="ml-[10px] mt-[2px] w-[335px] h-[92px] rounded-[4px] bg-white border border-[#d4d4d4] flex items-center font-['Liberation_Sans',sans-serif] text-[64px] leading-none">
        <span className="ml-[52px] text-black [text-shadow:1px_3px_3px_rgba(0,0,0,0.35)]">A</span>
        <span className="ml-[50px] text-[#55a03a] [text-shadow:1px_3px_3px_rgba(0,0,0,0.25)]">A</span>
        <span className="ml-[47px] text-[#d4e5a8] [-webkit-text-stroke:4px_#8ab833] [paint-order:stroke_fill]">A</span>
        <svg width="8" height="13" viewBox="0 0 8 13" fill="none" stroke="#444" strokeWidth="1.6" className="ml-[34px]">
          <path d="M1 1l5 5.5L1 12" />
        </svg>
      </div>
      <div className="ml-[6px] w-[76px] relative flex flex-col">
        <svg width="36" height="38" viewBox="0 0 36 38" className="ml-[9px] mt-[5px]">
          <text x="1" y="37" fontSize="46" fontFamily="Inter" fontWeight="200" fill="#333">A</text>
        </svg>
        <div className="w-[52px] h-[13px] bg-[#55a03a]" />
        <span className="mt-[7px] ml-[4px] text-[17px] tracking-[-0.3px] text-[#262626] whitespace-nowrap">Text Fill</span>
        <Chev className="absolute left-[58px] top-[28px]" />
      </div>
      <div className="ml-[1px] flex flex-col">
        <div className="flex items-center h-[30px] mt-[14px] pl-[8px] text-[17px] text-[#262626]">
          <div className="w-[25px] flex flex-col items-center">
            <OutlineA size={22} sw={1} />
            <div className="w-[25px] h-[6px] bg-black" />
          </div>
          <span className="ml-[10px] w-[96px] whitespace-nowrap">Text Outline</span>
          <Chev className="ml-[8px]" />
        </div>
        <div className="flex items-center w-[163px] h-[32px] mt-[19px] pl-[8px] bg-[#b2b2b2] text-[17px] text-[#262626]">
          <OutlineA size={29} color="#1565c0" fill="#cfe5fb" sw={2.4} />
          <span className="ml-[12px] w-[96px] whitespace-nowrap">Text Effects</span>
          <Chev className="ml-[8px]" />
        </div>
      </div>
    </div>
  );
}

const menuItems = ["Shadow", "Reflection", "Glow", "Bevel", "3-D Rotation", "Transform"];

function EffectsMenu() {
  return (
    <div className="absolute left-[1575px] top-[318px] w-[285px] pb-[7px] rounded-b-[8px] bg-[#ebebeb] shadow-[0_6px_18px_rgba(0,0,0,0.28)] text-[22px] font-['Inter',sans-serif]">
      {menuItems.map((m, i) => {
        const off = i > 2;
        return (
          <div key={m} className={`h-[38.4px] flex items-center pl-[34px] ${off ? "text-[#b5b5b5]" : "text-[#333333]"}`}>
            <div className="w-[30px] flex justify-center">
              {m === "Transform" ? (
                <span className="text-[20px] leading-none font-['Liberation_Sans',sans-serif] italic text-[#b5b5b5]">abc</span>
              ) : (
                <OutlineA size={34} color="#333" sw={1.5} grey={off} />
              )}
            </div>
            <span className="ml-[8px] w-[180px] whitespace-nowrap">{m}</span>
            <svg width="14" height="18" viewBox="0 0 14 18" className="ml-[2px]">
              <path d="M0 0l14 9-14 9z" fill={off ? "#b5b5b5" : "#444444"} />
            </svg>
          </div>
        );
      })}
    </div>
  );
}

const Highlight = ({ className }: { className: string }) => (
  <div className={`absolute border-[#990099] pointer-events-none ${className}`} />
);

export default function App() {
  return (
    <div className="relative w-[2048px] h-[1280px] overflow-hidden bg-[#f4f4f4] font-['Inter',sans-serif]">
      <div className="flex flex-col h-full">
        <TitleBar />
        <TabBar />
        <Ribbon />
        <div className="h-[2px] shrink-0 bg-[#cfcfcf]" />
        <div className="flex-1 flex min-h-0">
          <Sidebar />
          <div className="w-[6px] shrink-0 bg-[#f3f3f3]" />
          <div className="w-[2px] shrink-0 bg-[#d0d0d0]" />
          <SlideCanvas />
        </div>
        <StatusBar />
      </div>

      {/* caret of the popup under the WordArt button */}
      <svg width="32" height="20" viewBox="0 0 32 20" className="absolute left-[1430px] top-[195px]">
        <path d="M0 20 16 2l16 18z" fill="#f1f1f1" stroke="#dcdcdc" />
      </svg>
      <TextEffectsPopup />
      <Highlight className="left-[1385px] top-[465px] w-[190px] h-[82px] border-x-[10px] border-y-[10px]" />
      <EffectsMenu />
      <Highlight className="left-[1407px] top-[109px] w-[72px] h-[111px] border-x-[10px] border-y-[10px]" />
      <Highlight className="left-[1558px] top-[265px] w-[190px] h-[50px] border-x-[10px] border-y-[10px]" />
      <Highlight className="left-[1563px] top-[311px] w-[301px] h-[51px] border-x-[10px] border-y-[10px]" />
    </div>
  );
}
